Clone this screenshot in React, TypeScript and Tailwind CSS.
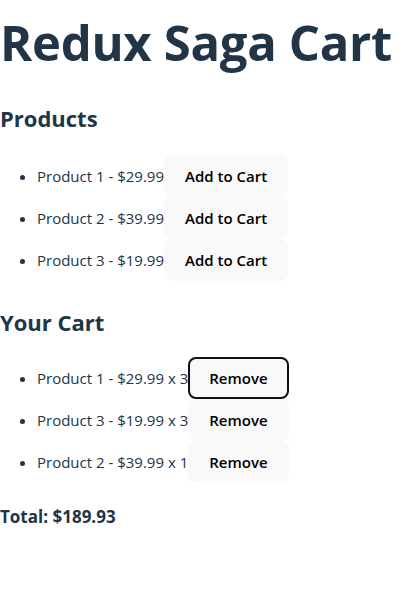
import { useState } from 'react';

type Product = { id: number; name: string; price: number };

const products: Product[] = [
  { id: 1, name: 'Product 1', price: 29.99 },
  { id: 2, name: 'Product 2', price: 39.99 },
  { id: 3, name: 'Product 3', price: 19.99 },
];

const btn =
  'inline-block rounded-lg border-2 border-transparent bg-[#f9f9f9] px-[19px] py-[8px] text-[15px] leading-[22px] font-semibold text-black';

export default function App() {
  const [cart] = useState([
    { ...products[0], qty: 3 },
    { ...products[2], qty: 3 },
    { ...products[1], qty: 1 },
  ]);

  const total = cart.reduce((sum, item) => sum + item.price * item.qty, 0);

  return (
    <div className="min-h-screen bg-white text-[#213547] font-['Open_Sans',sans-serif]">
      <h1 className="pt-[14px] text-[49px] leading-[56px] font-bold tracking-[-0.3px]">Redux Saga Cart</h1>

      {/* Products */}
      <h2 className="mt-[34px] text-[22px] leading-[28px] font-bold">Products</h2>
      <ul className="mt-[23px] list-disc pl-[37px] text-[15px]">
        {products.map((p) => (
          <li key={p.id} className="h-[42px]">
            Product {p.id} - ${p.price.toFixed(2)}
            <button className={btn}>Add to Cart</button>
          </li>
        ))}
      </ul>

      {/* Cart */}
      <h2 className="mt-[27px] text-[22px] leading-[28px] font-bold">Your Cart</h2>
      <ul className="mt-[21px] list-disc pl-[37px] text-[15px]">
        {cart.map((item, i) => (
          <li key={item.id} className="h-[42px]">
            {item.name} - ${item.price.toFixed(2)} x {item.qty}
            <button className={i === 0 ? btn.replace('border-transparent', 'border-[#111]') : btn}>Remove</button>
          </li>
        ))}
      </ul>

      <p className="mt-[21px] text-[17px] font-bold">Total: ${total.toFixed(2)}</p>
    </div>
  );
}
